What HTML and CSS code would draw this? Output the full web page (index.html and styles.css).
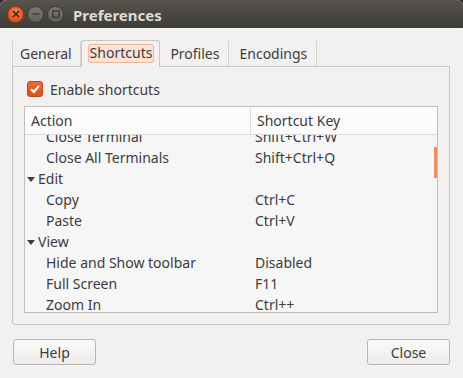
FILE: index.html
```html
<!DOCTYPE html>
<html>
<head>
<meta charset="utf-8">
<link rel="stylesheet" href="styles.css">
</head>
<body>
<div class="window">
  <div class="titlebar">
    <div class="wbtns">
      <span class="wbtn close"><svg width="8" height="8" viewBox="0 0 8 8"><path d="M1 1L7 7M7 1L1 7" stroke="#3c2418" stroke-width="1.6"/></svg></span>
      <span class="wbtn"><svg width="8" height="8" viewBox="0 0 8 8"><path d="M0.5 4H7.5" stroke="#3c3b37" stroke-width="1.6"/></svg></span>
      <span class="wbtn"><svg width="8" height="8" viewBox="0 0 8 8"><rect x="0.8" y="0.8" width="6.4" height="6.4" fill="none" stroke="#3c3b37" stroke-width="1.4"/></svg></span>
    </div>
    <div class="title">Preferences</div>
  </div>
  <div class="body">
    <div class="notebook">
      <div class="tabs">
        <div class="tab">General</div>
        <div class="tab active"><span class="focus">Shortcuts</span></div>
        <div class="tab">Profiles</div>
        <div class="tab">Encodings</div>
        <div class="tabfill"></div>
      </div>
      <div class="page">
        <label class="check">
          <span class="box"><svg width="12" height="12" viewBox="0 0 12 12"><path d="M2 6.2L4.8 9L10 2.8" fill="none" stroke="#fff" stroke-width="2"/></svg></span>
          <span>Enable shortcuts</span>
        </label>
        <div class="tree">
          <div class="thead">
            <div class="col1">Action</div>
            <div class="col2">Shortcut Key</div>
          </div>
          <div class="tbody">
            <div class="rows">
              <div class="row"><div class="c1 child">Close Terminal</div><div class="c2">Shift+Ctrl+W</div></div>
              <div class="row"><div class="c1 child">Close All Terminals</div><div class="c2">Shift+Ctrl+Q</div></div>
              <div class="row"><div class="c1 group"><span class="arrow"></span>Edit</div><div class="c2"></div></div>
              <div class="row"><div class="c1 child">Copy</div><div class="c2">Ctrl+C</div></div>
              <div class="row"><div class="c1 child">Paste</div><div class="c2">Ctrl+V</div></div>
              <div class="row"><div class="c1 group"><span class="arrow"></span>View</div><div class="c2"></div></div>
              <div class="row"><div class="c1 child">Hide and Show toolbar</div><div class="c2">Disabled</div></div>
              <div class="row"><div class="c1 child">Full Screen</div><div class="c2">F11</div></div>
              <div class="row"><div class="c1 child">Zoom In</div><div class="c2">Ctrl++</div></div>
            </div>
            <div class="scroll"></div>
          </div>
        </div>
      </div>
    </div>
    <div class="actions">
      <button class="btn">Help</button>
      <button class="btn">Close</button>
    </div>
  </div>
</div>
</body>
</html>
```

FILE: styles.css
```css
* { box-sizing: border-box; }
html, body { margin: 0; padding: 0; }
body {
  width: 463px;
  height: 378px;
  background: #3a1a2e;
  font-family: "Noto Sans", "Open Sans", sans-serif;
  font-size: 14px;
  color: #3c3c3c;
  overflow: hidden;
}
.window {
  width: 463px;
  height: 378px;
  background: #f2f1f0;
  border-radius: 6px 6px 0 0;
  overflow: hidden;
  display: flex;
  flex-direction: column;
}
.titlebar {
  height: 28px;
  flex: none;
  background: linear-gradient(#57544e, #3d3c38);
  display: flex;
  align-items: center;
  padding-left: 7px;
}
.wbtns { display: flex; gap: 3px; }
.wbtn {
  width: 17px; height: 17px;
  border-radius: 50%;
  background: linear-gradient(#7b7a74, #5f5e59);
  border: 1px solid #3a3935;
  display: flex; align-items: center; justify-content: center;
}
.wbtn.close {
  background: radial-gradient(circle at 50% 35%, #f5844f, #e1501d 70%);
  border-color: #9a3413;
}
.title {
  margin-left: 9px;
  color: #dfdbd2;
  font-weight: bold;
  font-size: 15px;
  line-height: 28px;
  padding-top: 1px;
}
.body {
  flex: 1;
  min-height: 0;
  display: flex;
  flex-direction: column;
  padding: 12px 13px 14px 12px;
}
.notebook { display: flex; flex-direction: column; }
.tabs { display: flex; height: 27px; align-items: flex-end; }
.tab {
  height: 26px;
  padding: 0 9px 0 10px;
  display: flex; align-items: center;
  border-bottom: 1px solid #c9c7c3;
  border-right: 1px solid #d6d4d0;
  line-height: 1;
}
.tab:first-child { border-left: 1px solid #d6d4d0; padding-left: 7px; padding-right: 8px; }
.tab.active {
  height: 27px;
  border: 1px solid #c9c7c3;
  border-bottom: none;
  border-radius: 3px 3px 0 0;
  padding: 0 5px 0 6px;
  background: #f2f1f0;
}
.focus {
  background: #fbe3d8;
  border: 1px solid #f0b59c;
  border-radius: 3px;
  padding: 1px 1px 2px;
  margin-top: -1px;
}
.tabfill { flex: 1; height: 1px; background: #c9c7c3; align-self: flex-end; }
.page {
  height: 258px;
  border: 1px solid #c9c7c3;
  border-top: none;
  border-radius: 0 0 3px 3px;
  padding: 14px 11px 11px 11px;
  display: flex; flex-direction: column;
}
.check { display: flex; align-items: center; gap: 7px; height: 16px; padding-left: 3px; }
.box {
  width: 16px; height: 16px;
  border-radius: 3px;
  background: linear-gradient(#ea6a38, #d8531f);
  border: 1px solid #b9461b;
  display: flex; align-items: center; justify-content: center;
}
.tree {
  margin-top: 9px;
  flex: 1;
  min-height: 0;
  border: 1px solid #c0bebb;
  display: flex; flex-direction: column;
  background: #f6f6f6;
}
.thead {
  height: 28px;
  flex: none;
  display: flex;
  background: #fbfbfb;
  border-bottom: 1px solid #dcdbda;
}
.thead .col1 { width: 226px; border-right: 1px solid #dcdbda; padding-left: 6px; display: flex; align-items: center; }
.thead .col2 { flex: 1; padding-left: 6px; display: flex; align-items: center; }
.tbody { flex: 1; min-height: 0; position: relative; overflow: hidden; }
.rows { margin-top: -9px; }
.row { height: 21px; display: flex; align-items: center; }
.c1 { width: 230px; }
.c1.child { padding-left: 21px; }
.c1.group { padding-left: 2px; display: flex; align-items: center; }
.arrow {
  width: 0; height: 0;
  border-left: 4px solid transparent;
  border-right: 4px solid transparent;
  border-top: 5px solid #3c3c3c;
  margin-right: 3px;
  margin-top: 1px;
}
.scroll {
  position: absolute;
  right: 0; top: 12px;
  width: 3px; height: 31px;
  background: #ef8f68;
}
.actions { margin-top: 14px; display: flex; justify-content: space-between; padding-left: 1px; }
.btn {
  width: 83px; height: 26px;
  font: inherit;
  color: #3c3c3c;
  background: linear-gradient(#fbfbfa, #ecebe9);
  border: 1px solid #b9b7b3;
  border-radius: 3px;
  padding: 0;
}
```
